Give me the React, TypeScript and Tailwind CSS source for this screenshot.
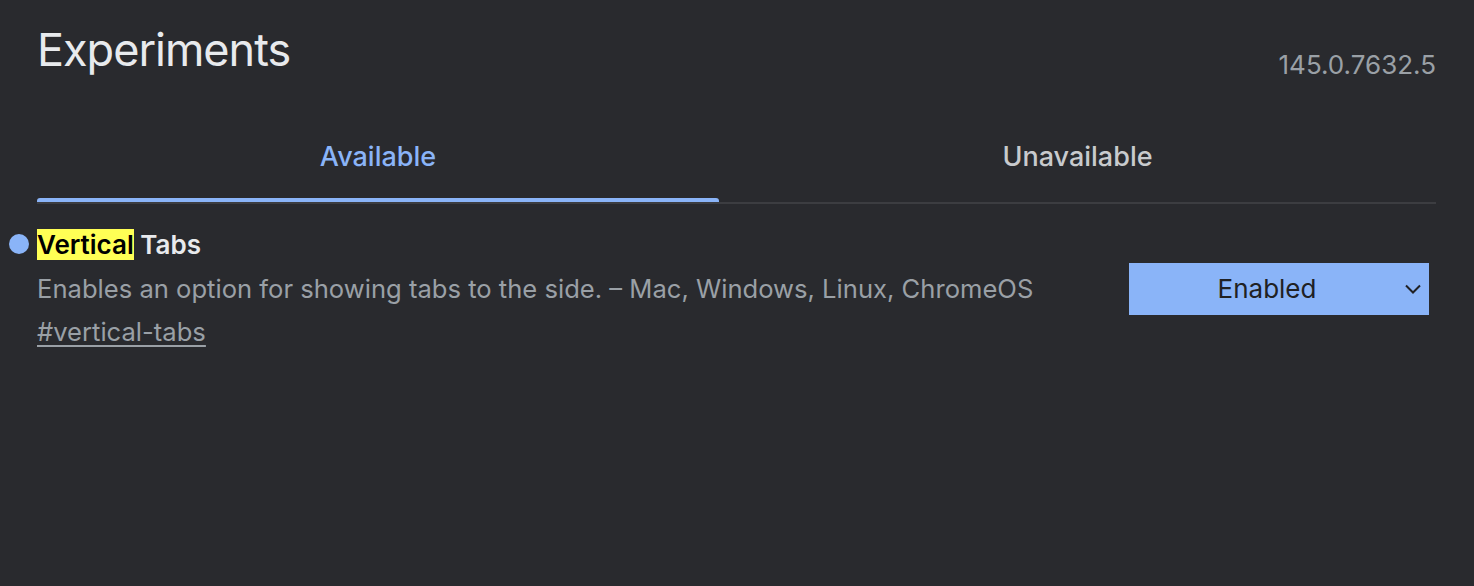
const font = { fontFamily: "Inter, 'Liberation Sans', sans-serif" };

function Tab({ label, active }: { label: string; active?: boolean }) {
  return (
    <div className="flex flex-col">
      <div
        className={`flex h-[86px] items-center justify-center pt-[4px] text-[27px] font-medium ${
          active ? "text-[#8ab4f8]" : "text-[#c8cacd]"
        }`}
      >
        {label}
      </div>
      <div className={`h-[4px] rounded-t-[3px] ${active ? "bg-[#8ab4f8]" : ""}`} />
    </div>
  );
}

export default function App() {
  return (
    <div className="min-h-screen bg-[#292a2e] pl-[37px] pr-[38px]" style={font}>
      <header className="flex items-start justify-between pt-[18px]">
        <h1 className="text-[45px] leading-[64px] font-normal tracking-[-1px] text-[#e8eaed]">
          Experiments
        </h1>
        <span className="mt-[29px] text-[26px] leading-[36px] text-[#9aa0a6]">
          145.0.7632.5
        </span>
      </header>

      <div className="mt-[29px] grid grid-cols-[682px_1fr] border-b-2 border-[#3c3d41]">
        <Tab label="Available" active />
        <Tab label="Unavailable" />
      </div>

      <div className="mt-[20px] flex items-center justify-between">
        <div className="-ml-[28px] flex">
          <span className="mr-[8px] mt-[10px] h-[20px] w-[20px] rounded-full bg-[#8ab4f8]" />
          <div>
            <div className="mt-[5px] text-[26px] leading-[32px] font-semibold text-[#e8eaed]">
              <mark className="bg-[#ffff55] text-black">Vertical</mark> Tabs
            </div>
            <p className="mt-[6px] text-[25.6px] leading-[43px] text-[#9aa0a6]">
              Enables an option for showing tabs to the side. – Mac, Windows, Linux, ChromeOS
            </p>
            <a className="block text-[25.6px] leading-[43px] text-[#9aa0a6] underline underline-offset-[4px]">
              #vertical-tabs
            </a>
          </div>
        </div>
        <div className="mr-[7px] flex h-[52px] w-[300px] items-center bg-[#8ab4f8] pr-[8px]">
          <span className="flex-1 text-center text-[26px] text-[#202124]">Enabled</span>
          <svg width="16" height="10" viewBox="0 0 16 10" fill="none" className="shrink-0">
            <path d="M1 1.5 8 8.5 15 1.5" stroke="#202124" strokeWidth="2" />
          </svg>
        </div>
      </div>
    </div>
  );
}
